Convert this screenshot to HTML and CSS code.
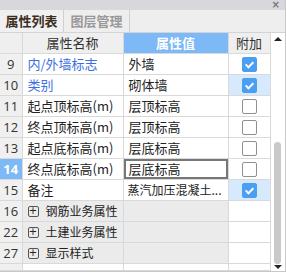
FILE: index.html
```html
<!DOCTYPE html>
<html lang="zh-CN">
<head>
  <meta charset="UTF-8">
  <title>属性列表</title>
  <link rel="stylesheet" href="styles.css">
</head>
<body>
  <div class="panel">
    <div class="titlebar"><span class="close">×</span></div>
    <div class="tabs">
      <div class="tab active">属性列表</div>
      <div class="tab">图层管理</div>
    </div>
    <div class="grid">
      <table class="props">
        <colgroup>
          <col class="c-num"><col class="c-name"><col class="c-val"><col class="c-add">
        </colgroup>
        <thead>
          <tr>
            <th class="num"></th>
            <th>属性名称</th>
            <th class="sel">属性值</th>
            <th>附加</th>
          </tr>
        </thead>
        <tbody>
          <tr>
            <td class="num">9</td>
            <td class="name link">内/外墙标志</td>
            <td>外墙</td>
            <td class="add"><span class="chk on"></span></td>
          </tr>
          <tr>
            <td class="num">10</td>
            <td class="name link">类别</td>
            <td>砌体墙</td>
            <td class="add hl"><span class="chk on"></span></td>
          </tr>
          <tr>
            <td class="num">11</td>
            <td class="name">起点顶标高(m)</td>
            <td>层顶标高</td>
            <td class="add"><span class="chk"></span></td>
          </tr>
          <tr>
            <td class="num">12</td>
            <td class="name">终点顶标高(m)</td>
            <td>层顶标高</td>
            <td class="add"><span class="chk"></span></td>
          </tr>
          <tr>
            <td class="num">13</td>
            <td class="name">起点底标高(m)</td>
            <td>层底标高</td>
            <td class="add"><span class="chk"></span></td>
          </tr>
          <tr>
            <td class="num cur">14</td>
            <td class="name">终点底标高(m)</td>
            <td class="edit">层底标高</td>
            <td class="add"><span class="chk"></span></td>
          </tr>
          <tr>
            <td class="num">15</td>
            <td class="name">备注</td>
            <td class="clip">蒸汽加压混凝土...</td>
            <td class="add hl"><span class="chk on"></span></td>
          </tr>
          <tr class="group">
            <td class="num">16</td>
            <td class="name"><span class="plus">+</span>钢筋业务属性</td>
            <td></td>
            <td class="add"></td>
          </tr>
          <tr class="group">
            <td class="num">22</td>
            <td class="name"><span class="plus">+</span>土建业务属性</td>
            <td></td>
            <td class="add"></td>
          </tr>
          <tr class="group">
            <td class="num">27</td>
            <td class="name"><span class="plus">+</span>显示样式</td>
            <td></td>
            <td class="add"></td>
          </tr>
          <tr class="tail">
            <td class="num"></td>
            <td></td>
            <td></td>
            <td class="add"></td>
          </tr>
        </tbody>
      </table>
      <div class="scroll">
        <span class="arrow up"></span>
        <div class="track"><div class="thumb"></div></div>
        <span class="arrow down"></span>
      </div>
    </div>
  </div>
</body>
</html>
```

FILE: styles.css
```css
body {
  margin: 0;
  background: #fff;
  font-family: "Noto Sans CJK SC", "Noto Sans", sans-serif;
  font-size: 13px;
  color: #222;
}
.panel {
  width: 286px;
  height: 272px;
  box-sizing: border-box;
  border-right: 1px solid #c8c8c8;
  border-bottom: 1px solid #c8c8c8;
  overflow: hidden;
}
.titlebar {
  height: 10px;
  background: #d8d8dc;
  display: flex;
  justify-content: flex-end;
  align-items: center;
  padding-right: 5px;
}
.close {
  font-family: "DejaVu Sans", sans-serif;
  font-size: 10px;
  line-height: 10px;
  color: #777;
  font-weight: bold;
}
.tabs {
  display: flex;
  height: 22px;
  background: #eeeeee;
  border-bottom: 1px solid #d4d4d4;
}
.tab {
  width: 66px;
  box-sizing: border-box;
  border-right: 1px solid #d0d0d0;
  text-align: center;
  line-height: 22px;
  font-size: 13px;
  font-weight: bold;
  color: #999;
}
.tab.active {
  width: 64px;
  color: #3b2e1e;
  background: #f0f0f0;
}
.grid {
  display: flex;
  height: 239px;
}
.props {
  width: 270px;
  border-collapse: collapse;
  table-layout: fixed;
  align-self: flex-start;
}
.c-num { width: 22px; }
.c-name { width: 101px; }
.c-val { width: 105px; }
.c-add { width: 42px; }
.props th,
.props td {
  height: 20px;
  padding: 0 0 0 5px;
  border: 1px solid #d9d9d9;
  white-space: nowrap;
  overflow: hidden;
  line-height: 20px;
}
.props tr > :first-child { border-left: none; }
.props thead tr > * { border-top: none; }
.props th {
  background: #efefef;
  font-weight: normal;
  text-align: center;
  padding: 0;
  color: #333;
}
.props th.sel {
  background: #7cb9f6;
  color: #fff;
  font-weight: bold;
}
.props td.num {
  background: #f0f0f0;
  text-align: center;
  padding: 0;
  font-family: "Open Sans", "Noto Sans", sans-serif;
  color: #333;
}
.props td.num.cur {
  background: #7cb9f6;
  color: #fff;
  font-weight: bold;
}
.link { color: #3d6fe3; }
.props td.edit {
  box-shadow: inset 0 0 0 2px #777;
}
.props td.add {
  text-align: center;
  padding: 0;
}
.props td.hl { background: #d7eafd; }
.props td.clip { font-size: 12px; padding-left: 4px; }
.chk {
  display: inline-block;
  width: 13px;
  height: 13px;
  border: 1px solid #8f8f8f;
  border-radius: 2px;
  background: #fff;
  vertical-align: middle;
  position: relative;
  top: -1px;
}
.chk.on {
  background: #4a9ff3;
  border-color: #4a9ff3;
}
.chk.on::after {
  content: "";
  position: absolute;
  left: 4px;
  top: 2px;
  width: 3px;
  height: 6px;
  border: solid #fff;
  border-width: 0 2px 2px 0;
  transform: rotate(45deg);
}
.group td { background: #ebebeb; }
.group td.num { background: #f0f0f0; }
.group td.add { background: #fff; }
.group td.name { font-size: 12px; }
.plus {
  display: inline-block;
  width: 9px;
  height: 9px;
  line-height: 8px;
  border: 1px solid #555;
  border-radius: 2px;
  font-size: 10px;
  text-align: center;
  margin-right: 7px;
  vertical-align: middle;
  position: relative;
  top: -1px;
  font-family: "DejaVu Sans", sans-serif;
}
.tail td { height: 6px; line-height: 6px; }
.scroll {
  width: 16px;
  display: flex;
  flex-direction: column;
  align-items: center;
  background: #fff;
}
.arrow {
  width: 0;
  height: 0;
  border-left: 4px solid transparent;
  border-right: 4px solid transparent;
}
.arrow.up {
  margin-top: 4px;
  border-bottom: 4px solid #222;
}
.arrow.down {
  margin-bottom: 3px;
  border-top: 4px solid #222;
}
.track {
  flex: 1;
  width: 7px;
  display: flex;
  flex-direction: column;
  justify-content: flex-end;
}
.thumb {
  height: 122px;
  background: #c9c9c9;
  border-radius: 4px;
  margin-bottom: 1px;
}
```
